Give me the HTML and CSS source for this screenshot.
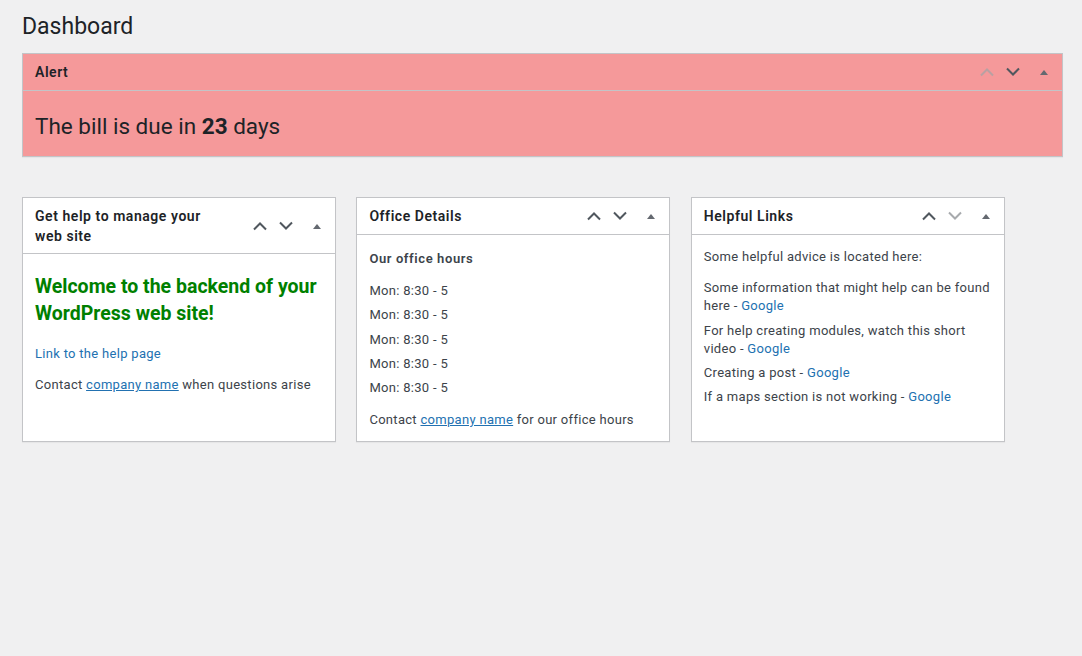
FILE: index.html
```html
<!DOCTYPE html>
<html lang="en">
<head>
<meta charset="utf-8">
<title>Dashboard</title>
<link rel="stylesheet" href="styles.css">
</head>
<body>
<div class="wrap">
  <h1 class="page-title">Dashboard</h1>

  <div class="postbox alert">
    <div class="postbox-header">
      <h2>Alert</h2>
      <div class="actions">
        <span class="btn disabled"><svg width="16" height="10" viewBox="0 0 16 10"><polyline points="2,8.5 8,2.5 14,8.5" fill="none" stroke="currentColor" stroke-width="2"/></svg></span>
        <span class="btn"><svg width="16" height="10" viewBox="0 0 16 10"><polyline points="2,1.5 8,7.5 14,1.5" fill="none" stroke="currentColor" stroke-width="2"/></svg></span>
        <span class="btn toggle"><svg width="10" height="6" viewBox="0 0 10 6"><polygon points="1,6 5,1 9,6" fill="currentColor"/></svg></span>
      </div>
    </div>
    <div class="alert-body">The bill is due in <strong>23</strong> days</div>
  </div>

  <div class="widgets">
    <div class="postbox">
      <div class="postbox-header">
        <h2 class="narrow">Get help to manage your web site</h2>
        <div class="actions">
          <span class="btn"><svg width="16" height="10" viewBox="0 0 16 10"><polyline points="2,8.5 8,2.5 14,8.5" fill="none" stroke="currentColor" stroke-width="2"/></svg></span>
          <span class="btn"><svg width="16" height="10" viewBox="0 0 16 10"><polyline points="2,1.5 8,7.5 14,1.5" fill="none" stroke="currentColor" stroke-width="2"/></svg></span>
          <span class="btn toggle"><svg width="10" height="6" viewBox="0 0 10 6"><polygon points="1,6 5,1 9,6" fill="currentColor"/></svg></span>
        </div>
      </div>
      <div class="inside">
        <h3 class="welcome">Welcome to the backend of your WordPress web site!</h3>
        <p><a href="#" class="plain">Link to the help page</a></p>
        <p class="last">Contact <a href="#" class="ul">company name</a> when questions arise</p>
      </div>
    </div>

    <div class="postbox">
      <div class="postbox-header">
        <h2>Office Details</h2>
        <div class="actions">
          <span class="btn"><svg width="16" height="10" viewBox="0 0 16 10"><polyline points="2,8.5 8,2.5 14,8.5" fill="none" stroke="currentColor" stroke-width="2"/></svg></span>
          <span class="btn"><svg width="16" height="10" viewBox="0 0 16 10"><polyline points="2,1.5 8,7.5 14,1.5" fill="none" stroke="currentColor" stroke-width="2"/></svg></span>
          <span class="btn toggle"><svg width="10" height="6" viewBox="0 0 10 6"><polygon points="1,6 5,1 9,6" fill="currentColor"/></svg></span>
        </div>
      </div>
      <div class="inside">
        <h4 class="sub">Our office hours</h4>
        <ul class="hours">
          <li>Mon: 8:30 - 5</li>
          <li>Mon: 8:30 - 5</li>
          <li>Mon: 8:30 - 5</li>
          <li>Mon: 8:30 - 5</li>
          <li>Mon: 8:30 - 5</li>
        </ul>
        <p class="last">Contact <a href="#" class="ul">company name</a> for our office hours</p>
      </div>
    </div>

    <div class="postbox">
      <div class="postbox-header">
        <h2>Helpful Links</h2>
        <div class="actions">
          <span class="btn"><svg width="16" height="10" viewBox="0 0 16 10"><polyline points="2,8.5 8,2.5 14,8.5" fill="none" stroke="currentColor" stroke-width="2"/></svg></span>
          <span class="btn disabled"><svg width="16" height="10" viewBox="0 0 16 10"><polyline points="2,1.5 8,7.5 14,1.5" fill="none" stroke="currentColor" stroke-width="2"/></svg></span>
          <span class="btn toggle"><svg width="10" height="6" viewBox="0 0 10 6"><polygon points="1,6 5,1 9,6" fill="currentColor"/></svg></span>
        </div>
      </div>
      <div class="inside">
        <p class="intro">Some helpful advice is located here:</p>
        <ul class="links">
          <li>Some information that might help can be found here - <a href="#" class="plain">Google</a></li>
          <li>For help creating modules, watch this short video - <a href="#" class="plain">Google</a></li>
          <li>Creating a post - <a href="#" class="plain">Google</a></li>
          <li>If a maps section is not working - <a href="#" class="plain">Google</a></li>
        </ul>
      </div>
    </div>
  </div>
</div>
</body>
</html>
```
FILE: styles.css
```css
html, body {
  margin: 0;
  padding: 0;
}

body {
  background: #f0f0f1;
  color: #3c434a;
  font-family: Roboto, "Noto Sans", "Liberation Sans", sans-serif;
  font-size: 13px;
  line-height: 1.4;
  letter-spacing: 0.3px;
}

.wrap {
  padding: 12px 19px 40px 22px;
}

.page-title {
  margin: 0 0 11px;
  font-size: 23px;
  font-weight: 400;
  line-height: 30px;
  letter-spacing: 0;
  color: #1d2327;
}

.postbox {
  background: #fff;
  border: 1px solid #c3c4c7;
  box-shadow: 0 1px 1px rgba(0, 0, 0, 0.04);
  display: flex;
  flex-direction: column;
}

.postbox.alert {
  background: #f5999a;
}

.postbox-header {
  display: flex;
  align-items: center;
  border-bottom: 1px solid #c3c4c7;
}

.postbox-header h2 {
  flex: 1;
  margin: 0;
  padding: 9px 12px 7px;
  font-size: 14px;
  font-weight: 600;
  line-height: 1.4;
  letter-spacing: 0.55px;
  color: #1d2327;
}

.postbox-header h2.narrow {
  padding-right: 30px;
}

.actions {
  display: flex;
  flex-shrink: 0;
}

.btn {
  width: 26px;
  height: 36px;
  display: flex;
  align-items: center;
  justify-content: center;
  color: #50575e;
}

.btn.toggle {
  width: 36px;
  color: #646970;
}

.btn.disabled {
  color: #a7aaad;
}

.alert .btn.disabled {
  color: #b9a0a2;
}

.alert-body {
  padding: 20px 12px 14px;
  font-size: 22.5px;
  line-height: 31px;
  letter-spacing: 0;
  color: #1d2327;
}

.alert-body strong {
  font-weight: 700;
}

.widgets {
  display: grid;
  grid-template-columns: 314px 314px 314px;
  column-gap: 20.4px;
  margin-top: 40px;
}

.inside {
  flex: 1;
  padding: 0 12px 12px;
}

.inside p {
  margin: 0 0 13px;
}

.inside p.last {
  margin-bottom: 0;
}

.welcome {
  margin: 19px 0 18px;
  font-size: 19.5px;
  line-height: 27px;
  font-weight: 700;
  letter-spacing: 0;
  color: #008000;
}

.sub {
  margin: 15px 0 14px;
  font-size: 13px;
  font-weight: 600;
  letter-spacing: 0.6px;
  color: #3c434a;
}

.hours,
.links {
  list-style: none;
  margin: 0 0 14px;
  padding: 0;
}

.hours li,
.links li {
  margin: 0 0 6px;
}

.hours li:last-child {
  margin-bottom: 0;
}

.intro {
  margin-top: 13px !important;
}

a {
  color: #2271b1;
}

a.plain {
  text-decoration: none;
}

a.ul {
  text-decoration: underline;
}
```
